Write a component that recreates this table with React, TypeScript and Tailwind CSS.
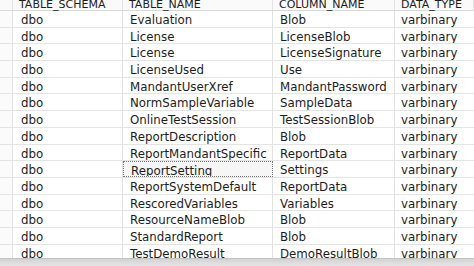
const columns = [
  { key: 'schema', label: 'TABLE_SCHEMA', width: 'w-[110px]' },
  { key: 'table', label: 'TABLE_NAME', width: 'w-[150px]' },
  { key: 'column', label: 'COLUMN_NAME', width: 'w-[122px]' },
  { key: 'type', label: 'DATA_TYPE', width: 'flex-1' },
];

const rows = [
  ['Evaluation', 'Blob'],
  ['License', 'LicenseBlob'],
  ['License', 'LicenseSignature'],
  ['LicenseUsed', 'Use'],
  ['MandantUserXref', 'MandantPassword'],
  ['NormSampleVariable', 'SampleData'],
  ['OnlineTestSession', 'TestSessionBlob'],
  ['ReportDescription', 'Blob'],
  ['ReportMandantSpecific', 'ReportData'],
  ['ReportSetting', 'Settings'],
  ['ReportSystemDefault', 'ReportData'],
  ['RescoredVariables', 'Variables'],
  ['ResourceNameBlob', 'Blob'],
  ['StandardReport', 'Blob'],
  ['TestDemoResult', 'DemoResultBlob'],
];

const SELECTED = 9;

export default function App() {
  return (
    <div
      className="w-[474px] h-[266px] overflow-hidden bg-white flex flex-col text-[#1c1c1c]"
      style={{ fontFamily: '"DejaVu Sans", Verdana, sans-serif' }}
    >
      {/* Header */}
      <div className="flex h-[11px] shrink-0 border-b border-[#d9d9d9] bg-[#fafafa] text-[11px] leading-[9px]">
        <div className="w-[13px] border-r border-[#e2e2e2]" />
        {columns.map((c) => (
          <div key={c.key} className={`${c.width} pl-[6px] border-r border-[#e2e2e2] whitespace-nowrap`}>
            {c.label}
          </div>
        ))}
      </div>

      {/* Rows */}
      <div className="flex-1 overflow-hidden text-[11.8px]">
        {rows.map(([table, column], i) => (
          <div key={i} className="flex h-[16.7px] border-b border-[#e4e4e4]">
            <div className="w-[13px] border-r border-[#e2e2e2] bg-[#fbfbfb]" />
            <div className="w-[110px] pl-[8px] pt-[2px] leading-[14px] border-r border-[#e2e2e2]">dbo</div>
            <div
              className={`w-[150px] pl-[7px] pt-[2px] leading-[14px] whitespace-nowrap overflow-hidden ${
                i === SELECTED
                  ? 'border border-dotted border-[#777] bg-[#f6f6f6] pl-[6px] pt-[1px]'
                  : 'border-r border-[#e2e2e2]'
              }`}
            >
              {table}
            </div>
            <div className="w-[122px] pl-[7px] pt-[2px] leading-[14px] border-r border-[#e2e2e2] whitespace-nowrap overflow-hidden">
              {column}
            </div>
            <div className="flex-1 pl-[6px] pt-[2px] leading-[14px] whitespace-nowrap overflow-hidden">varbinary</div>
          </div>
        ))}
      </div>

      {/* Horizontal scrollbar strip */}
      <div className="h-[8px] shrink-0 bg-gradient-to-b from-[#d2d2d2] to-[#e6e6e6] border-t border-[#c4c4c4]" />
    </div>
  );
}
